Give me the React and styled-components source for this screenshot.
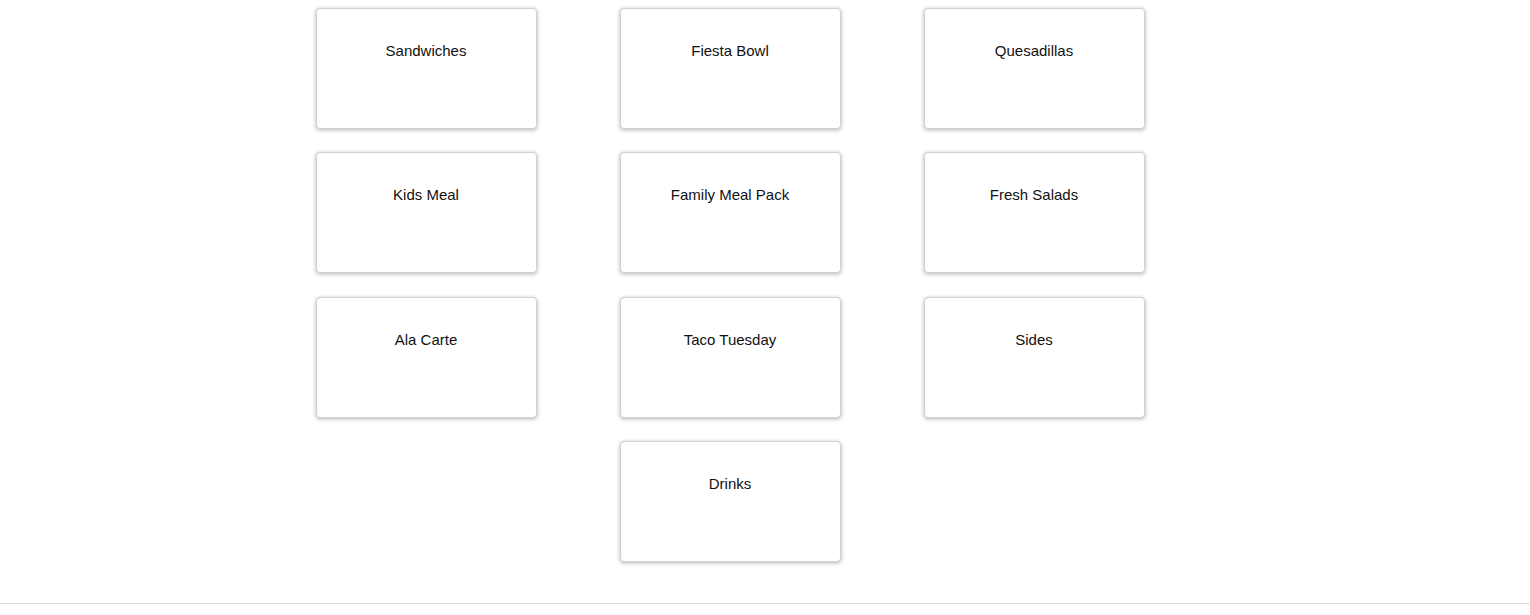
import React from 'react';
import styled, { createGlobalStyle } from 'styled-components';

const GlobalStyle = createGlobalStyle`
  html, body {
    margin: 0;
    padding: 0;
    background: #ffffff;
  }
  body {
    font-family: 'Liberation Sans', Arial, sans-serif;
    color: #111;
  }
`;

const Page = styled.div`
  padding-top: 8px;
`;

const Menu = styled.div`
  width: 912px;
  margin-left: 274px;
  display: flex;
  flex-wrap: wrap;
  justify-content: center;
`;

const Slot = styled.div`
  width: 304px;
  display: flex;
  justify-content: center;
`;

const CategoryCard = styled.button`
  width: 221px;
  height: 121px;
  margin-bottom: 23.3px;
  padding: 33px 8px 0;
  box-sizing: border-box;
  display: flex;
  justify-content: center;
  align-items: flex-start;
  background: #fff;
  border: 1px solid #d0d0d0;
  border-radius: 4px;
  box-shadow: 0 1px 4px rgba(0, 0, 0, 0.3);
  font-family: 'Liberation Sans', Arial, sans-serif;
  font-size: 15px;
  color: #111;
  cursor: pointer;
`;

const Footer = styled.div`
  margin-top: 18px;
  border-top: 1px solid #dcdcdc;
  height: 11px;
`;

const categories = [
  'Sandwiches',
  'Fiesta Bowl',
  'Quesadillas',
  'Kids Meal',
  'Family Meal Pack',
  'Fresh Salads',
  'Ala Carte',
  'Taco Tuesday',
  'Sides',
  'Drinks',
];

const App = () => (
  <Page>
    <GlobalStyle />
    <Menu>
      {categories.map((name) => (
        <Slot key={name}>
          <CategoryCard>{name}</CategoryCard>
        </Slot>
      ))}
    </Menu>
    <Footer />
  </Page>
);

export default App;
